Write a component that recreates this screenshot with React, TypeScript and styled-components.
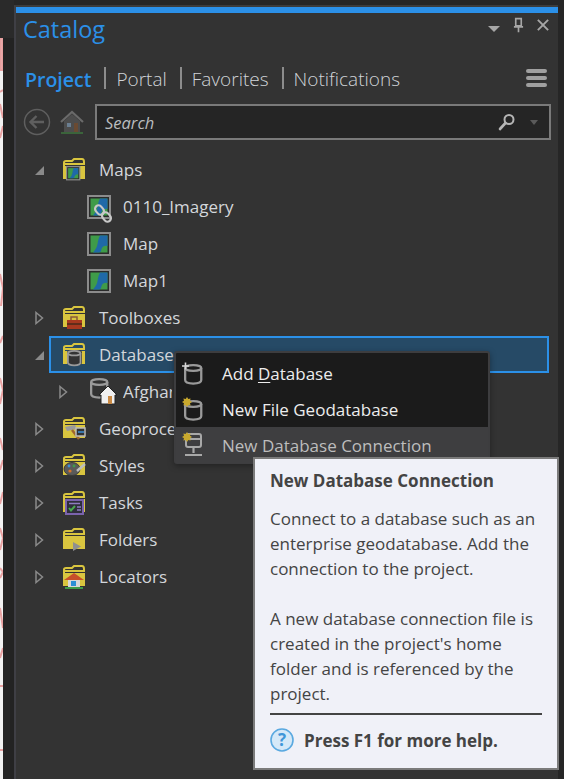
import React from 'react'
import styled, { createGlobalStyle } from 'styled-components'

const UI_FONT = `"Open Sans", "Noto Sans", "Liberation Sans", sans-serif`

const GlobalStyle = createGlobalStyle`
  html, body { margin: 0; padding: 0; background: #252525; }
  body { font-family: ${UI_FONT}; overflow: hidden; }
  * { box-sizing: border-box; }
`

// Window frame
const Screen = styled.div`
  position: relative;
  display: flex;
  width: 564px;
  height: 779px;
  overflow: hidden;
  background: #262626;
`

const LeftEdge = styled.div`
  display: flex;
  flex-direction: column;
  width: 14px;
  flex-shrink: 0;
  background: #2a2a2a;
`

const LeftEdgeBody = styled.div`
  display: flex;
  flex: 1;
  margin-top: 38px;
  background: #232323;
`

const MapSliver = styled.svg`
  display: block;
  width: 3px;
  height: 741px;
  flex-shrink: 0;
`

const PanelColumn = styled.div`
  display: flex;
  flex-direction: column;
  width: 544px;
  padding-top: 5px;
  flex-shrink: 0;
`

const Panel = styled.div`
  flex: 1;
  display: flex;
  flex-direction: column;
  background: #333333;
  border-left: 2px solid #3f3f45;
  border-top: 2px solid #3c3c3c;
`

const AccentBar = styled.div`
  height: 6px;
  background: #2b90e8;
`

// Title and tabs
const TitleRow = styled.div`
  display: flex;
  align-items: flex-start;
  justify-content: space-between;
  height: 47px;
  padding: 0 8px 0 7px;
`

const Title = styled.div`
  font-size: 23.5px;
  font-weight: 400;
  line-height: 32px;
  color: #2b90e8;
`

const PaneControls = styled.div`
  display: flex;
  align-items: flex-start;
  gap: 13px;
  padding-top: 4px;
  padding-right: 1px;
`

const TabRow = styled.div`
  display: flex;
  align-items: center;
  height: 36px;
  padding: 0 11px 0 9px;
`

const Tab = styled.div<{ $active?: boolean }>`
  padding-top: 3px;
  font-size: ${({ $active }) => ($active ? '19.5px' : '19px')};
  font-weight: ${({ $active }) => ($active ? 600 : 300)};
  line-height: 33px;
  color: ${({ $active }) => ($active ? '#2b90e8' : '#d0d4d8')};
`

const TabDivider = styled.div`
  width: 2px;
  height: 22px;
  margin: 0 10px 0 13px;
  background: #8c8c8c;
`

const MenuBars = styled.div`
  display: flex;
  flex-direction: column;
  gap: 3px;
  width: 21px;
  margin-left: auto;
`

const MenuBar = styled.div`
  height: 4px;
  border-radius: 2px;
  background: #a0a0a0;
`

// Search toolbar
const Toolbar = styled.div`
  display: flex;
  align-items: center;
  height: 36px;
  margin-top: 8px;
  padding: 0 7px 0 7px;
`

const ToolIcons = styled.div`
  display: flex;
  align-items: center;
  gap: 9px;
  width: 72px;
  flex-shrink: 0;
`

const SearchBox = styled.div`
  flex: 1;
  display: flex;
  align-items: center;
  justify-content: space-between;
  height: 36px;
  padding: 0 11px 0 8px;
  background: #252525;
  border: 2px solid #7a7a7a;
`

const SearchPlaceholder = styled.span`
  font-size: 16.5px;
  font-style: italic;
  color: #b9bcbf;
`

const SearchActions = styled.div`
  display: flex;
  align-items: center;
  gap: 14px;
`

// Catalog tree
const Tree = styled.div`
  display: flex;
  flex-direction: column;
  margin-top: 11px;
`

const Row = styled.div<{ $level: number }>`
  display: flex;
  align-items: center;
  height: 37px;
  padding-left: ${({ $level }) => 16 + $level * 24}px;
  font-size: 17px;
  color: #d3d7db;
  white-space: nowrap;
`

const SelectedBody = styled.div`
  flex: 1;
  display: flex;
  align-items: center;
  align-self: stretch;
  margin: 0 9px 0 -13px;
  padding-left: 11px;
  background: #264a66;
  border: 2px solid #2b90e8;
`

const TwistySlot = styled.div`
  display: flex;
  align-items: center;
  justify-content: center;
  width: 14px;
  margin-right: 16px;
  flex-shrink: 0;
`

const IconSlot = styled.div`
  display: flex;
  align-items: center;
  width: 24px;
  margin-right: 13px;
  flex-shrink: 0;

  svg {
    flex-shrink: 0;
  }
`

// Text that runs under the context menu stops at the menu's left edge
const ClippedLabel = styled.span<{ $width: number }>`
  display: block;
  width: ${({ $width }) => $width}px;
  overflow: hidden;
`

// Context menu and tooltip
const ContextMenu = styled.div`
  position: absolute;
  left: 174px;
  top: 351px;
  width: 316px;
  height: 113px;
  padding: 2px 0;
  background: #1b1b1b;
  border: 2px solid #3d3d3f;
  border-radius: 3px;
  box-shadow: 0 2px 6px rgba(0, 0, 0, 0.35);
`

const MenuItem = styled.div<{ $hover?: boolean }>`
  display: flex;
  align-items: center;
  height: 36px;
  padding-left: 6px;
  font-size: 17px;
  white-space: nowrap;
  color: ${({ $hover }) => ($hover ? '#bdbdbd' : '#ededed')};
  background: ${({ $hover }) => ($hover ? '#3e3e40' : 'transparent')};
`

const MenuIconSlot = styled.div`
  display: flex;
  width: 40px;
  flex-shrink: 0;
`

const AccessKey = styled.span`
  text-decoration: underline;
  text-underline-offset: 2px;
`

const Tooltip = styled.div`
  position: absolute;
  left: 253px;
  top: 457px;
  width: 306px;
  height: 313px;
  padding: 10px 15px 0 15px;
  background: #f0f1f8;
  border: 2px solid #7b7b7b;
  color: #444444;
  font-size: 17px;
`

const TooltipTitle = styled.div`
  font-size: 17px;
  font-weight: 700;
  line-height: 24px;
  white-space: nowrap;
`

const TooltipBody = styled.p`
  margin: 13px 0 0;
  line-height: 25px;
`

const TooltipBodyNext = styled(TooltipBody)`
  margin-top: 25px;
`

const TooltipRule = styled.div`
  height: 2px;
  margin-top: 7px;
  background: #444444;
`

const HelpRow = styled.div`
  display: flex;
  align-items: center;
  gap: 10px;
  margin-top: 13px;
  font-weight: 700;
  white-space: nowrap;
`

// Icons
const Twisty = ({ open }: { open?: boolean }) => (
  <svg width="12" height="14" viewBox="0 0 12 14">
    {open ? (
      <path d="M11 3 V12 H2 Z" fill="#8a8a8a" />
    ) : (
      <path d="M3 1.5 L9.5 7 L3 12.5 Z" fill="none" stroke="#8a8a8a" strokeWidth="1.5" />
    )}
  </svg>
)

const FolderIcon = ({ children }: { children?: React.ReactNode }) => (
  <svg width="24" height="24" viewBox="0 0 24 24">
    <path d="M2 20 V4.5 Q2 3 4 3 H10 L12 1 H20 Q22 1 22 4 V6 H3" fill="none" stroke="#d9c53f" strokeWidth="2" />
    <rect x="1" y="8" width="22" height="13" fill="#d9c53f" />
    {children}
  </svg>
)

const MapArt = () => (
  <>
    <rect x="1" y="1" width="22" height="22" fill="#2b2b2b" stroke="#8c8c8c" strokeWidth="2" />
    <rect x="3.5" y="3.5" width="17" height="17" fill="#3f9b49" />
    <path d="M13 3.5 H20.5 V14 Q16 13 14.5 17 Q14 20.5 12 20.5 H6 Q10 16 10.5 12 Q11 7 13 3.5 Z" fill="#1f69a8" />
  </>
)

const MapIconFrame = styled.svg`
  margin-left: 1px;
  overflow: visible;
`

const MapIcon = ({ linked }: { linked?: boolean }) => (
  <MapIconFrame width="24" height="24" viewBox="0 0 24 24">
    <MapArt />
    {linked && (
      <g fill="none" stroke="#c8c8c8" strokeWidth="2.2">
        <rect x="9" y="10" width="7" height="10" rx="3.5" transform="rotate(-40 12.5 15)" />
        <rect x="16" y="17" width="7" height="10" rx="3.5" transform="rotate(-40 19.5 22)" />
      </g>
    )}
  </MapIconFrame>
)

const DbShape = ({ x = 0, y = 0, scale = 1 }: { x?: number; y?: number; scale?: number }) => (
  <g transform={`translate(${x} ${y}) scale(${scale})`} fill="none" stroke="#9a9a9a" strokeWidth="2">
    <ellipse cx="8" cy="3.5" rx="7" ry="2.5" />
    <path d="M1 3.5 V14 Q1 17 8 17 Q15 17 15 14 V3.5" />
  </g>
)

const Sparkle = () => (
  <path
    d="M5 0 L6.3 2 L8.6 1.4 L8 3.7 L10 5 L8 6.3 L8.6 8.6 L6.3 8 L5 10 L3.7 8 L1.4 8.6 L2 6.3 L0 5 L2 3.7 L1.4 1.4 L3.7 2 Z"
    fill="#c9a92e"
  />
)

const Search = () => (
  <svg width="18" height="18" viewBox="0 0 18 18">
    <circle cx="11" cy="6.5" r="4.5" fill="none" stroke="#b5b5b5" strokeWidth="2" />
    <path d="M7.5 10 L2 16" stroke="#b5b5b5" strokeWidth="2.6" strokeLinecap="round" />
  </svg>
)

const SmallCaret = ({ color }: { color: string }) => (
  <svg width="8" height="5" viewBox="0 0 8 5">
    <path d="M0 0 H8 L4 5 Z" fill={color} />
  </svg>
)

const toolboxArt = (
  <>
    <rect x="5" y="14" width="15" height="9" fill="#a8391f" />
    <path d="M9 14 V11 H15 V14" fill="none" stroke="#8a5a3a" strokeWidth="1.5" />
    <path d="M5 18 H20" stroke="#4a2a1a" strokeWidth="1.5" />
  </>
)

const lowerRows = [
  {
    label: 'Geoprocessing History',
    clip: 75,
    art: (
      <>
        <path d="M3 10 L13 8 L15 12 L5 14 Z" fill="#9a9a9a" />
        <path d="M10 13 L17 22" stroke="#a0672f" strokeWidth="2.5" />
        <rect x="14" y="11" width="9" height="8" fill="#333" stroke="#bbb" strokeWidth="1.5" />
        <path d="M16 15 H22" stroke="#3d8fd6" strokeWidth="1.5" />
      </>
    ),
  },
  {
    label: 'Styles',
    art: (
      <>
        <ellipse cx="10" cy="15" rx="8" ry="6.5" fill="#5a5a5a" stroke="#3a3a3a" />
        <circle cx="7" cy="12" r="1.4" fill="#3d8fd6" />
        <circle cx="12" cy="12" r="1.4" fill="#3f9b49" />
        <circle cx="8" cy="17" r="1.6" fill="#d8742a" />
        <path d="M15 17 L23 10" stroke="#bdbdbd" strokeWidth="2.5" />
      </>
    ),
  },
  {
    label: 'Tasks',
    art: (
      <>
        <rect x="4" y="9" width="17" height="14" fill="#2e2e3a" stroke="#7a63ad" strokeWidth="2" />
        <path d="M7 17 L9 19.5 L13 15" fill="none" stroke="#4aa84f" strokeWidth="2" />
        <path d="M7 12.5 H18 M15 16 H19 M15 19 H19" stroke="#8f7cc0" strokeWidth="1.5" />
      </>
    ),
  },
  {
    label: 'Folders',
    art: <path d="M11 14 L19 18.5 L11 23 Z" fill="#8f8f8f" />,
  },
  {
    label: 'Locators',
    art: (
      <>
        <path d="M2 15 L12 8 L22 15 Z" fill="#c8502a" />
        <rect x="6" y="15" width="12" height="7" fill="#d8d8d8" />
        <rect x="9" y="16" width="5" height="5" fill="#2b8fd6" />
        <path d="M3 23 H21" stroke="#3f9b49" strokeWidth="2" />
      </>
    ),
  },
]

const pinkMarks = [
  'M0 0 H3 V32 H0 Z',
  'M0 54 L3 52',
  'M0 66 L3 80',
  'M0 100 L3 88',
  'M0 236 L3 250 L1 268',
  'M0 305 L3 298',
  'M0 340 L3 352 L0 366',
  'M0 400 L3 412',
  'M0 432 L3 422',
  'M0 466 L3 454',
  'M0 490 L3 500 L0 512',
  'M0 540 L3 534 L0 530',
  'M0 570 L3 590',
  'M0 620 L3 610',
  'M0 648 H3',
  'M0 712 H3',
]

export default function App() {
  return (
    <Screen>
      <GlobalStyle />
      <LeftEdge>
        <LeftEdgeBody>
          <MapSliver viewBox="0 0 3 741" preserveAspectRatio="none">
            <rect width="3" height="741" fill="#f1f1f1" />
            {pinkMarks.map((d) => (
              <path key={d} d={d} fill={d.endsWith('Z') ? '#e8a9a9' : 'none'} stroke="#e8a0a0" strokeWidth="2" />
            ))}
          </MapSliver>
        </LeftEdgeBody>
      </LeftEdge>

      <PanelColumn>
        <Panel>
          <AccentBar />
          <TitleRow>
            <Title>Catalog</Title>
            <PaneControls>
              <svg width="12" height="6" viewBox="0 0 12 6" style={{ marginTop: 9 }}>
                <path d="M0 0 H12 L6 6 Z" fill="#a6a6a6" />
              </svg>
              <svg width="11" height="16" viewBox="0 0 12 16">
                <path d="M3 1 H9 V9 H3 Z M1 10 H11 M6 10 V16" fill="none" stroke="#a6a6a6" strokeWidth="1.8" />
              </svg>
              <svg width="12" height="12" viewBox="0 0 14 14" style={{ marginTop: 2 }}>
                <path d="M1 1 L13 13 M13 1 L1 13" stroke="#a6a6a6" strokeWidth="2.2" />
              </svg>
            </PaneControls>
          </TitleRow>

          <TabRow>
            <Tab $active>Project</Tab>
            <TabDivider />
            <Tab>Portal</Tab>
            <TabDivider />
            <Tab>Favorites</Tab>
            <TabDivider />
            <Tab>Notifications</Tab>
            <MenuBars>
              <MenuBar />
              <MenuBar />
              <MenuBar />
            </MenuBars>
          </TabRow>

          <Toolbar>
            <ToolIcons>
              <svg width="28" height="28" viewBox="0 0 28 28">
                <circle cx="14" cy="14" r="12.5" fill="none" stroke="#5f5f5f" strokeWidth="1.5" />
                <path d="M21 14 H8 M13.5 8 L7.5 14 L13.5 20" fill="none" stroke="#5f5f5f" strokeWidth="2.4" />
              </svg>
              <svg width="24" height="24" viewBox="0 0 24 24">
                <path d="M1 12 L12 2 L23 12" fill="none" stroke="#6a6a6a" strokeWidth="2.2" />
                <path d="M4 11 L12 4 L20 11 V22 H4 Z" fill="#4d4d4d" />
                <rect x="14" y="13" width="4" height="9" fill="#6a4a32" />
                <rect x="7" y="13" width="4" height="4" fill="#6b7f92" />
                <path d="M1 23 H23" stroke="#3f7a3f" strokeWidth="1.4" />
              </svg>
            </ToolIcons>
            <SearchBox>
              <SearchPlaceholder>Search</SearchPlaceholder>
              <SearchActions>
                <Search />
                <SmallCaret color="#5a5a5a" />
              </SearchActions>
            </SearchBox>
          </Toolbar>

          <Tree>
            <Row $level={0}>
              <TwistySlot><Twisty open /></TwistySlot>
              <IconSlot>
                <FolderIcon>
                  <g transform="translate(4 8) scale(0.6)">
                    <MapArt />
                  </g>
                </FolderIcon>
              </IconSlot>
              Maps
            </Row>
            <Row $level={1}>
              <TwistySlot />
              <IconSlot><MapIcon linked /></IconSlot>
              0110_Imagery
            </Row>
            <Row $level={1}>
              <TwistySlot />
              <IconSlot><MapIcon /></IconSlot>
              Map
            </Row>
            <Row $level={1}>
              <TwistySlot />
              <IconSlot><MapIcon /></IconSlot>
              Map1
            </Row>
            <Row $level={0}>
              <TwistySlot><Twisty /></TwistySlot>
              <IconSlot><FolderIcon>{toolboxArt}</FolderIcon></IconSlot>
              Toolboxes
            </Row>
            <Row $level={0}>
              <TwistySlot><Twisty open /></TwistySlot>
              <SelectedBody>
                <IconSlot>
                  <FolderIcon>
                    <rect x="5" y="7" width="15" height="15" rx="3" fill="#333" />
                    <DbShape x={5} y={7} scale={0.9} />
                  </FolderIcon>
                </IconSlot>
                <ClippedLabel $width={75}>Databases</ClippedLabel>
              </SelectedBody>
            </Row>
            <Row $level={1}>
              <TwistySlot><Twisty /></TwistySlot>
              <IconSlot>
                <svg width="32" height="30" viewBox="0 0 32 30">
                  <DbShape x={4} y={1} scale={1.15} />
                  <path d="M13 18 L22 9 L31 18 H29 V27 H15 V18 Z" fill="#f0f0f0" stroke="#222" strokeWidth="1" />
                  <rect x="22" y="19" width="4" height="8" fill="#c98a45" />
                </svg>
              </IconSlot>
              <ClippedLabel $width={49}>Afghanistan.gdb</ClippedLabel>
            </Row>
            {lowerRows.map((row) => (
              <Row $level={0} key={row.label}>
                <TwistySlot><Twisty /></TwistySlot>
                <IconSlot><FolderIcon>{row.art}</FolderIcon></IconSlot>
                {row.clip ? <ClippedLabel $width={row.clip}>{row.label}</ClippedLabel> : row.label}
              </Row>
            ))}
          </Tree>
        </Panel>
      </PanelColumn>

      <ContextMenu>
        <MenuItem>
          <MenuIconSlot>
            <svg width="24" height="24" viewBox="0 0 24 24">
              <DbShape x={2} y={3} scale={1.15} />
              <path d="M0 5 H7 M3.5 1.5 V8.5" stroke="#d8d8d8" strokeWidth="1.6" />
            </svg>
          </MenuIconSlot>
          <span>Add <AccessKey>D</AccessKey>atabase</span>
        </MenuItem>
        <MenuItem>
          <MenuIconSlot>
            <svg width="24" height="24" viewBox="0 0 24 24">
              <DbShape x={2} y={3} scale={1.15} />
              <Sparkle />
            </svg>
          </MenuIconSlot>
          New File Geodatabase
        </MenuItem>
        <MenuItem $hover>
          <MenuIconSlot>
            <svg width="24" height="26" viewBox="0 0 24 26">
              <rect x="4" y="2" width="15" height="13" rx="2" fill="none" stroke="#a8a8a8" strokeWidth="2" />
              <path d="M4 7 H19 M11.5 15 V21 M3 23 H20" stroke="#a8a8a8" strokeWidth="2.2" />
              <Sparkle />
            </svg>
          </MenuIconSlot>
          New Database Connection
        </MenuItem>
      </ContextMenu>

      <Tooltip>
        <TooltipTitle>New Database Connection</TooltipTitle>
        <TooltipBody>
          Connect to a database such as an enterprise geodatabase. Add the connection to the project.
        </TooltipBody>
        <TooltipBodyNext>
          A new database connection file is created in the project's home folder and is referenced by the project.
        </TooltipBodyNext>
        <TooltipRule />
        <HelpRow>
          <svg width="24" height="24" viewBox="0 0 24 24">
            <circle cx="12" cy="12" r="11" fill="#d5e9f8" stroke="#5aa9e0" strokeWidth="1.6" />
            <text x="12" y="18" textAnchor="middle" fontSize="17" fontWeight="700" fill="#3f97d8" fontFamily="Open Sans">?</text>
          </svg>
          Press F1 for more help.
        </HelpRow>
      </Tooltip>
    </Screen>
  )
}
